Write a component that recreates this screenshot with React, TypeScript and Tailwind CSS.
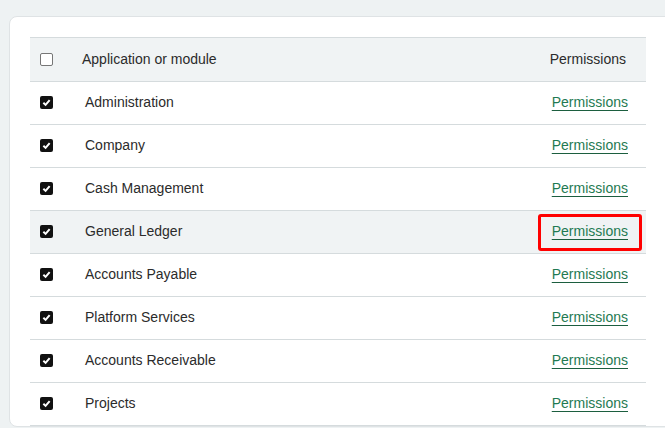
import React from "react";

const modules = [
  "Administration",
  "Company",
  "Cash Management",
  "General Ledger",
  "Accounts Payable",
  "Platform Services",
  "Accounts Receivable",
  "Projects",
];

function Box({ checked }: { checked: boolean }) {
  if (!checked) {
    return (
      <span className="block w-[13px] h-[13px] rounded-[2px] border border-[#767676] bg-white" />
    );
  }
  return (
    <span className="flex items-center justify-center w-[13px] h-[13px] rounded-[2px] bg-[#111]">
      <svg width="9" height="9" viewBox="0 0 10 10">
        <path d="M1.5 5.2 L4 7.6 L8.5 2.4" fill="none" stroke="white" strokeWidth="2.2" />
      </svg>
    </span>
  );
}

export default function App() {
  return (
    <div
      className="h-[428px] w-[665px] overflow-hidden bg-[#eef2f3] pt-4 pl-[9px]"
      style={{ fontFamily: '"Liberation Sans", Arial, sans-serif' }}
    >
      <div className="w-[670px] rounded-lg border border-[#dfe3e5] bg-white pt-5 pl-5">
        <div className="w-[616px] border-t border-[#d5dbdd] text-[14px] text-[#2b2b2b]">
          <div className="flex h-[44px] items-center border-b border-[#d5dbdd] bg-[#f0f3f4]">
            <div className="w-[52px] pl-[10px]">
              <Box checked={false} />
            </div>
            <div className="flex-1">Application or module</div>
            <div className="pr-[20px]">Permissions</div>
          </div>
          {modules.map((m) => {
            const active = m === "General Ledger";
            return (
              <div
                key={m}
                className={`flex h-[43px] items-center border-b border-[#d5dbdd] pb-[2px] ${active ? "bg-[#f0f3f4]" : ""}`}
              >
                <div className="w-[55px] pl-[10px]">
                  <Box checked={true} />
                </div>
                <div className="flex-1">{m}</div>
                <div className="relative pr-[18px]">
                  <a
                    href="#"
                    className="text-[#1f7a52] underline decoration-[#1c5e3f] underline-offset-[3px]"
                  >
                    Permissions
                  </a>
                  {active && (
                    <span className="pointer-events-none absolute -top-[7px] -left-[14px] right-[4px] -bottom-[9px] rounded-[3px] border-[3px] border-[#ff0000]" />
                  )}
                </div>
              </div>
            );
          })}
        </div>
      </div>
    </div>
  );
}
